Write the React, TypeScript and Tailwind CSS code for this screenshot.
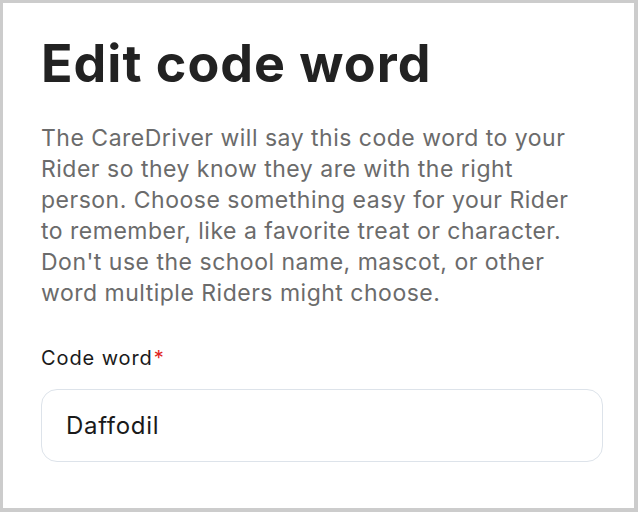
export default function App() {
  return (
    <div className="min-h-screen w-full bg-[#cccccc] pt-[3px] pl-[3px] pr-[4px] pb-[4px] font-['Inter',sans-serif]">
      <div className="h-[505px] bg-white pl-[38px] pr-[31px] pt-[29px]">
        <h1 className="text-[52px] leading-[64px] font-bold tracking-[1px] text-[#222222]">
          Edit code word
        </h1>
        <p className="mt-[27px] text-[23px] leading-[31px] tracking-[0.5px] text-[#6b6b6b]">
          The CareDriver will say this code word to your
          <br />
          Rider so they know they are with the right
          <br />
          person. Choose something easy for your Rider
          <br />
          to remember, like a favorite treat or character.
          <br />
          Don't use the school name, mascot, or other
          <br />
          word multiple Riders might choose.
        </p>
        <label className="mt-[37px] block text-[20px] leading-[25px] tracking-[0.9px] text-[#1a1a1a]">
          Code word<span className="ml-[1px] text-[#e02424]">*</span>
        </label>
        <div className="mt-[18px] flex h-[73px] items-center rounded-[16px] border-[1.5px] border-[#dde3ea] px-[24px]">
          <span className="text-[24px] tracking-[0.7px] text-[#1a1a1a]">Daffodil</span>
        </div>
      </div>
    </div>
  );
}
